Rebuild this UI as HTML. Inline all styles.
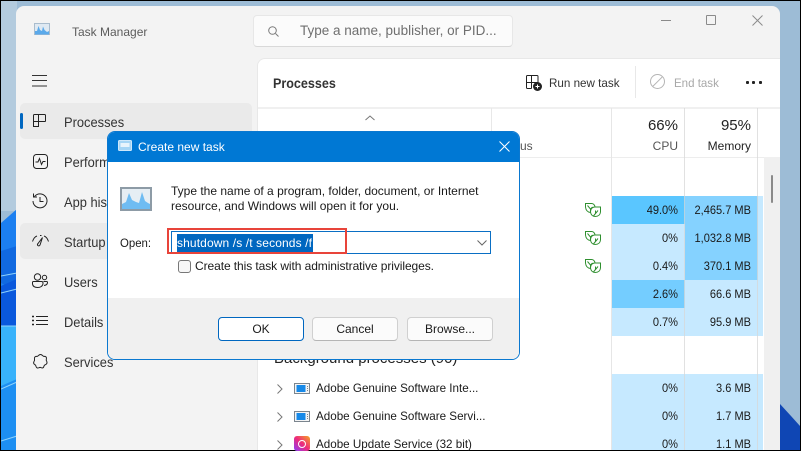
<!DOCTYPE html>
<html><head><meta charset="utf-8">
<style>
html,body{margin:0;padding:0;width:801px;height:451px;overflow:hidden;background:#000}
*{box-sizing:border-box}
body{font-family:"Liberation Sans",sans-serif;position:relative}
.a{position:absolute}
.t{position:absolute;white-space:nowrap;font-size:13px;color:#1a1a1a;line-height:16px}
.r{text-align:right}
.v{font-size:12px;transform:scaleX(.92);transform-origin:right center}
.n{font-size:14px;color:#333;transform:scaleX(.92);transform-origin:left center}
.p{font-size:12px;transform:scaleX(.97);transform-origin:left center}
svg{position:absolute;overflow:visible}
.btn{position:absolute;top:317px;width:86px;height:24px;background:#fbfbfb;border:1px solid #d0d0d0;border-bottom-color:#b5b5b5;border-radius:4px;text-align:center;font-size:12px;line-height:22px;color:#1a1a1a}
</style></head><body>
<!-- wallpaper -->
<div class="a" style="left:1px;top:1px;width:799px;height:449px;background:#9dbdd6;overflow:hidden">
<svg width="799" height="449" style="left:0;top:0">
<rect x="0" y="0" width="799" height="449" fill="#9dbcd6"/>
<rect x="0" y="0" width="16" height="210" fill="#b3cbde"/>
<path d="M0 222 L16 208 V449 H0Z" fill="#1c7ff0"/>
<path d="M0 250 L16 245 V290 L0 282Z" fill="#1169e0"/>
<path d="M0 285 L16 278 V325 H0Z" fill="#0a58dc"/>
<path d="M0 325 H16 V449 H0Z" fill="#38b2fb"/>
<path d="M0 385 L16 378 V449 H0Z" fill="#1d8ff2"/>
<path d="M0 275 L16 272M0 292 L16 288M0 325 H16M0 388 L16 381M0 440 L16 435" stroke="#8fd3fb" stroke-width="1" fill="none"/>
<path d="M779 403 L790 415 L799 425 V449 H779Z" fill="#0f46b4"/>
</svg>
</div>
<!-- window -->
<div class="a" style="left:16px;top:6px;width:764px;height:444px;background:#f3f3f3;border-radius:8px 8px 0 0;overflow:hidden"></div>
<div class="t" style="left:72px;top:24px;font-size:12px;color:#5c5c5c">Task Manager</div>
<svg style="left:34px;top:23px" width="16" height="13" viewBox="0 0 16 13"><rect x=".5" y=".5" width="15" height="11" fill="#dfe9f2" stroke="#a9bccd"/><path d="M1 11 L1 8 L3 8 L4.500 3 L6 7 L8 8 L9 3.500 L10.500 7 L13 9 L15 8 V11.500 H1Z" fill="#5aa9ea"/></svg>
<!-- search -->
<div class="a" style="left:253px;top:15px;width:260px;height:32px;background:#fbfbfb;border:1px solid #e7e7e7;border-bottom-color:#d9d9d9;border-radius:4px"></div>
<svg style="left:268px;top:26px" width="12" height="11" viewBox="0 0 12 11" fill="none" stroke="#7a7a7a" stroke-width="1"><circle cx="4.500" cy="4.500" r="3.800"/><path d="M7.500 7.500L10.500 10.500"/></svg>
<div class="t" style="left:300px;top:23px;font-size:13.500px;color:#6f6f6f">Type a name, publisher, or PID...</div>
<!-- win controls -->
<div class="a" style="left:661px;top:20px;width:10px;height:1px;background:#8a8a8a"></div>
<div class="a" style="left:706px;top:15px;width:10px;height:10px;border:1px solid #8a8a8a;border-radius:1px"></div>
<svg style="left:752px;top:15px" width="11" height="11" viewBox="0 0 11 11" stroke="#8a8a8a" stroke-width="1"><path d="M.5 .5 L10.500 10.500M10.500 .5 L.5 10.500"/></svg>
<!-- nav -->
<svg style="left:32px;top:75px" width="16" height="12" stroke="#333" stroke-width="1"><path d="M0 .5H15M0 5.500H15M0 11H15"/></svg>
<div class="a" style="left:20px;top:103px;width:232px;height:36px;background:#eaeaea;border-radius:5px"></div>
<div class="a" style="left:20px;top:113px;width:3px;height:16px;background:#0067c0;border-radius:2px"></div>
<svg style="left:33px;top:114px" width="13" height="13" viewBox="0 0 13 13" fill="none" stroke="#222" stroke-width="1"><path d="M.5 4.500V12.500H5.500V.500H1.500Q.5 .5 .5 1.500V7.500H12.500M5.500 .5H11.500Q12.500 .5 12.500 1.500V7.500"/></svg>
<div class="t n" style="left:64px;top:114px">Processes</div>
<svg style="left:33px;top:154px" width="15" height="15" viewBox="0 0 15 15" fill="none" stroke="#222" stroke-width="1"><rect x=".5" y=".5" width="14" height="14" rx="3"/><path d="M2.500 8H5L6.500 4.500L8.500 10.500L10 7.500H12.500"/></svg>
<div class="t n" style="left:64px;top:154px">Perform</div>
<svg style="left:32px;top:193px" width="16" height="16" viewBox="0 0 16 16" fill="none" stroke="#222" stroke-width="1"><path d="M2.500 3.500A7 7 0 1 1 1 8M1.500 .5V4H5M8 4V8.500H11.500"/></svg>
<div class="t n" style="left:64px;top:194px">App his</div>
<div class="a" style="left:20px;top:223px;width:120px;height:36px;background:#eaeaea;border-radius:5px"></div>
<svg style="left:32px;top:235px" width="17" height="12" viewBox="0 0 17 12" fill="none" stroke="#222" stroke-width="1"><path d="M.5 6.500Q2 2 5 1M8 .5H9.500M12 1Q15 2 16.500 6.500M10.500 2.500L8 10Q7 11.500 5.800 10.500Q5 9.500 6 8.500Z"/></svg>
<div class="t n" style="left:64px;top:234px">Startup</div>
<svg style="left:32px;top:273px" width="16" height="15" viewBox="0 0 16 15" fill="none" stroke="#222" stroke-width="1"><circle cx="5.500" cy="4" r="3.200"/><circle cx="12.500" cy="4.500" r="2.200"/><path d="M1.500 8.500H9.500Q11 8.500 11 10V11Q10 14.500 5.500 14.500Q1 14.500 .5 11V9.500Q.5 8.500 1.500 8.500ZM11.500 8.500H14.500Q15.500 8.500 15.500 9.500Q15.500 12 12 12.500"/></svg>
<div class="t n" style="left:64px;top:274px">Users</div>
<svg style="left:32px;top:316px" width="16" height="10" stroke="#222" stroke-width="1"><path d="M4 .5H16M4 4.500H16M4 8.500H16"/><path d="M0 .5H2M0 4.500H2M0 8.500H2" stroke-width="1.500"/></svg>
<div class="t n" style="left:64px;top:314px">Details</div>
<svg style="left:33px;top:354px" width="15" height="15" viewBox="0 0 15 15" fill="none" stroke="#222" stroke-width="1"><path d="M5.500 1.500Q7.500 -.5 9.500 1.500Q10.500 2.800 12 2.300Q14 3 13.300 5.300Q13 6.500 13.800 7.500Q14.500 9.500 12.800 10.500Q11.500 10.800 11 12Q10.500 14.500 8.500 13.800Q7 13 5.800 13.800Q3.500 14.500 3 12.300Q2.800 11 1.700 10.500Q0 9.500 1 7.500Q1.800 6.500 1.500 5.300Q1 3 3 2.300Q4.500 2.800 5.500 1.500Z"/></svg>
<div class="t n" style="left:64px;top:354px">Services</div>
<!-- content -->
<div class="a" style="left:257px;top:58px;width:523px;height:392px;background:#fff;border:1px solid #e8e8e8;border-right:0;border-bottom:0;border-radius:8px 0 0 0"></div>
<div class="t" style="left:273px;top:76px;font-size:13.500px;font-weight:bold;color:#333;transform:scaleX(.93);transform-origin:left">Processes</div>
<svg style="left:526px;top:75px" width="16" height="16" viewBox="0 0 16 16" fill="none" stroke="#222" stroke-width="1"><path d="M5.500 13.500H1.500Q.5 13.500 .5 12.500V1.500Q.5 .5 1.500 .5H5.500V13.500M.5 7.500H12M5.500 .5H11Q12 .5 12 1.500V7.500"/><circle cx="11.500" cy="11.500" r="4.500" fill="#222" stroke="none"/><path d="M9.500 11.500H13.500M11.500 9.500V13.500" stroke="#fff"/></svg>
<div class="t" style="left:549px;top:75px;font-size:12px;color:#333;transform:scaleX(.97);transform-origin:left">Run new task</div>
<div class="a" style="left:635px;top:66px;width:1px;height:32px;background:#e8e8e8"></div>
<svg style="left:650px;top:74px" width="15" height="15" viewBox="0 0 15 15" fill="none" stroke="#b5b5b5" stroke-width="1"><circle cx="7.500" cy="7.500" r="7"/><path d="M2.700 12.500L12.500 2.700"/></svg>
<div class="t" style="left:674px;top:75px;font-size:12px;color:#a8a8a8;transform:scaleX(.96);transform-origin:left">End task</div>
<svg style="left:746px;top:81px" width="16" height="4" fill="#222"><rect x="0" y="0" width="3" height="3" rx="1"/><rect x="6" y="0" width="3" height="3" rx="1"/><rect x="13" y="0" width="3" height="3" rx="1"/></svg>
<div class="a" style="left:258px;top:107px;width:522px;height:2px;background:#f0f0f0"></div>
<div class="a" style="left:258px;top:157px;width:506px;height:1px;background:#ededed"></div>
<div class="a" style="left:491px;top:108px;width:1px;height:49px;background:#e8e8e8"></div>
<svg style="left:365px;top:115px" width="10" height="6" fill="none" stroke="#777"><path d="M.5 5L5 1L9.500 5"/></svg>
<div class="t" style="left:520px;top:138px;font-size:12px;color:#555">us</div>
<div class="t r" style="left:612px;top:118px;width:66px;font-size:15px;color:#222">66%</div>
<div class="t r" style="left:612px;top:138px;width:66px;font-size:12px;color:#555">CPU</div>
<div class="t r" style="left:685px;top:118px;width:66px;font-size:15px;color:#222">95%</div>
<div class="t r" style="left:685px;top:138px;width:66px;font-size:12px;color:#222">Memory</div>
<!-- heat -->
<div class="a" style="left:612px;top:196px;width:151px;height:140px;background:#c6e9ff"></div>
<div class="a" style="left:612px;top:196px;width:73px;height:28px;background:#5ac6ff"></div>
<div class="a" style="left:685px;top:196px;width:73px;height:84px;background:#85d2ff"></div>
<div class="a" style="left:612px;top:280px;width:73px;height:28px;background:#74cdff"></div>
<div class="a" style="left:612px;top:374px;width:151px;height:76px;background:#c6e9ff"></div>
<!-- col lines -->
<div class="a" style="left:611px;top:108px;width:1px;height:342px;background:#e6e6e6"></div>
<div class="a" style="left:684px;top:108px;width:1px;height:342px;background:rgba(215,215,215,.75)"></div>
<div class="a" style="left:757px;top:108px;width:1px;height:342px;background:rgba(215,215,215,.75)"></div>
<!-- scroll -->
<div class="a" style="left:764px;top:157px;width:16px;height:293px;background:#f0f0f0"></div>
<div class="a" style="left:771px;top:175px;width:2px;height:28px;background:#8a8a8a;border-radius:1px"></div>
<!-- leaf -->
<svg width="0" height="0"><defs><g id="leaf" fill="none" stroke="#2f8f2f" stroke-width="1"><path d="M5.500 9.500Q1 9 .5 4V.5H6.500Q9 .5 10 3.500"/><path d="M15.500 4V9Q15 13.500 10 13.500Q6 13 5.500 9Q5.500 4.500 9.500 4Z"/><path d="M2.500 2.500L5.500 6V9M5.500 6L7.500 4M8 13.500L13 7.500M10.500 10.500V7.500"/></g></defs></svg>
<svg style="left:585px;top:203px" width="16" height="14"><use href="#leaf"/></svg>
<svg style="left:585px;top:231px" width="16" height="14"><use href="#leaf"/></svg>
<svg style="left:585px;top:259px" width="16" height="14"><use href="#leaf"/></svg>
<!-- values -->
<div class="t r v" style="left:612px;top:202px;width:66px">49.0%</div><div class="t r v" style="left:685px;top:202px;width:66px">2,465.7 MB</div>
<div class="t r v" style="left:612px;top:230px;width:66px">0%</div><div class="t r v" style="left:685px;top:230px;width:66px">1,032.8 MB</div>
<div class="t r v" style="left:612px;top:258px;width:66px">0.4%</div><div class="t r v" style="left:685px;top:258px;width:66px">370.1 MB</div>
<div class="t r v" style="left:612px;top:286px;width:66px">2.6%</div><div class="t r v" style="left:685px;top:286px;width:66px">66.6 MB</div>
<div class="t r v" style="left:612px;top:314px;width:66px">0.7%</div><div class="t r v" style="left:685px;top:314px;width:66px">95.9 MB</div>
<div class="t r v" style="left:612px;top:380px;width:66px">0%</div><div class="t r v" style="left:685px;top:380px;width:66px">3.6 MB</div>
<div class="t r v" style="left:612px;top:408px;width:66px">0%</div><div class="t r v" style="left:685px;top:408px;width:66px">1.7 MB</div>
<div class="t r v" style="left:612px;top:436px;width:66px">0%</div><div class="t r v" style="left:685px;top:436px;width:66px">1.1 MB</div>
<!-- bg processes -->
<div class="t" style="left:274px;top:351px;font-size:15px;color:#222">Background processes (90)</div>
<svg style="left:277px;top:384px" width="6" height="10" fill="none" stroke="#777" stroke-width="1"><path d="M.5 .5L5 5L.5 9.500"/></svg>
<svg style="left:277px;top:412px" width="6" height="10" fill="none" stroke="#777" stroke-width="1"><path d="M.5 .5L5 5L.5 9.500"/></svg>
<svg style="left:277px;top:440px" width="6" height="10" fill="none" stroke="#777" stroke-width="1"><path d="M.5 .5L5 5L.5 9.500"/></svg>
<svg style="left:294px;top:383px" width="16" height="11"><rect x=".5" y=".5" width="15" height="10" fill="#f4f4f4" stroke="#7b858e"/><rect x="2.500" y="2" width="9" height="7" fill="#1689e8"/><path d="M13.500 3V8" stroke="#7b858e" stroke-dasharray="1 1"/></svg>
<svg style="left:294px;top:411px" width="16" height="11"><rect x=".5" y=".5" width="15" height="10" fill="#f4f4f4" stroke="#7b858e"/><rect x="2.500" y="2" width="9" height="7" fill="#1689e8"/><path d="M13.500 3V8" stroke="#7b858e" stroke-dasharray="1 1"/></svg>
<svg style="left:294px;top:436px" width="16" height="14"><defs><linearGradient id="ad" x1="1" y1="0" x2="0" y2="1"><stop offset="0" stop-color="#f5a623"/><stop offset=".5" stop-color="#ee2a7b"/><stop offset="1" stop-color="#8a3ffc"/></linearGradient></defs><rect width="16" height="15" rx="3" fill="url(#ad)"/><circle cx="8" cy="8" r="3.500" fill="none" stroke="#fff"/></svg>
<div class="t p" style="left:316px;top:380px">Adobe Genuine Software Inte...</div>
<div class="t p" style="left:316px;top:408px">Adobe Genuine Software Servi...</div>
<div class="t p" style="left:316px;top:436px">Adobe Update Service (32 bit)</div>
<!-- dialog -->
<div class="a" style="left:107px;top:131px;width:413px;height:229px;background:#fff;border:1px solid #0a78d0;border-radius:8px;overflow:hidden">
  <div class="a" style="left:0;top:0;width:411px;height:30px;background:#0078d4"></div>
  <div class="a" style="left:0;top:166px;width:411px;height:61px;background:#f0f0f0"></div>
</div>
<svg style="left:118px;top:140px" width="14" height="11"><rect x=".5" y=".5" width="13" height="10" rx="1" fill="#a5d5f5" stroke="#cfe8fa"/><rect x="2.500" y="3" width="9" height="4" fill="#e8f4fc"/></svg>
<div class="t" style="left:138px;top:139px;font-size:12px;color:#fff">Create new task</div>
<svg style="left:499px;top:141px" width="11" height="11" stroke="#fff" stroke-width="1"><path d="M.5 .5L10.500 10.500M10.500 .5L.5 10.500"/></svg>
<svg style="left:120px;top:187px" width="32" height="24" viewBox="0 0 32 24"><rect x="1" y="1" width="30" height="22" fill="#e6eef4" stroke="#8d9ba6" stroke-width="2"/><path d="M2 22V17L6 15L9 6L12 13L16 15L19 16L22 5L25 14L28 16L30 17V22Z" fill="#6fbcf2"/></svg>
<div class="t" style="left:171px;top:183px;font-size:12px">Type the name of a program, folder, document, or Internet</div>
<div class="t" style="left:171px;top:198px;font-size:12px">resource, and Windows will open it for you.</div>
<div class="t" style="left:120px;top:235px;font-size:12px;transform:scaleX(.95);transform-origin:left">Open:</div>
<div class="a" style="left:171px;top:231px;width:320px;height:23px;background:#fff;border:1px solid #0a6fc4"></div>
<div class="a" style="left:177px;top:234px;width:136px;height:18px;background:#0067c0"></div>
<div class="t" style="left:177px;top:235px;font-size:12px;color:#fff;letter-spacing:.12px">shutdown /s /t seconds /f</div>
<div class="a" style="left:167px;top:228px;width:180px;height:26px;border:2px solid #e8443a"></div>
<svg style="left:477px;top:240px" width="10" height="6" fill="none" stroke="#666"><path d="M.5 .5L5 5L9.500 .5"/></svg>
<div class="a" style="left:178px;top:260px;width:13px;height:13px;background:#f7f7f7;border:1px solid #777;border-radius:3px"></div>
<div class="t" style="left:195px;top:258px;font-size:12px;letter-spacing:-.08px">Create this task with administrative privileges.</div>
<div class="btn" style="left:218px;border:1px solid #0067c0;background:#fff">OK</div>
<div class="btn" style="left:312px">Cancel</div>
<div class="btn" style="left:407px">Browse...</div>
</body></html>
